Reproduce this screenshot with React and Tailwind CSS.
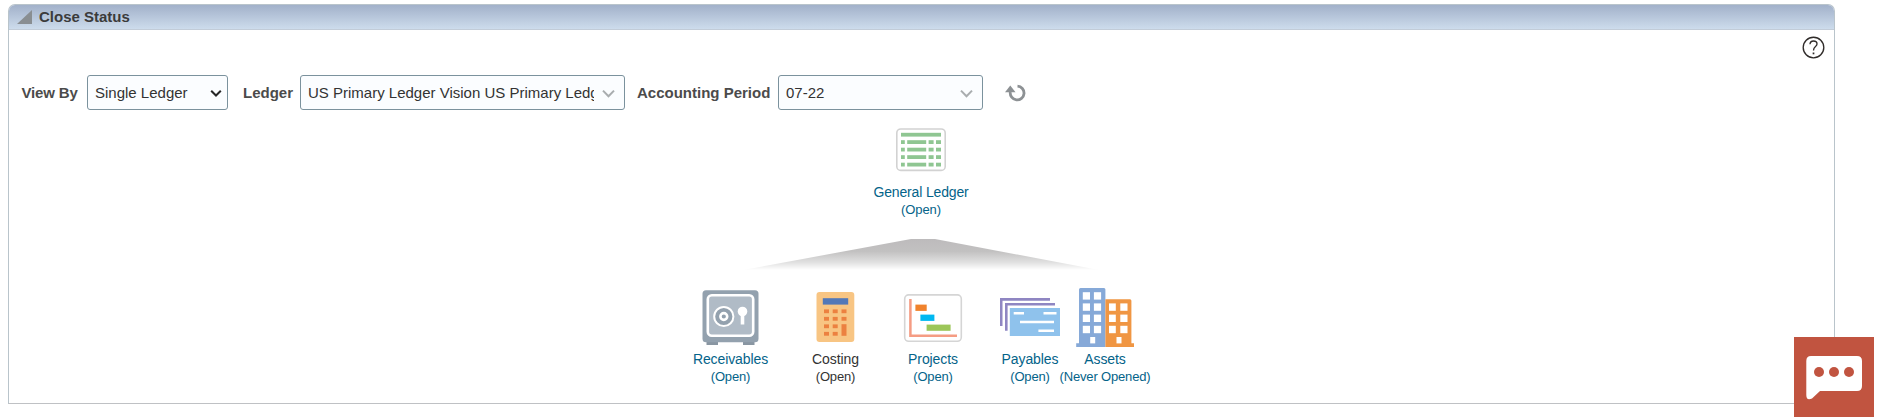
function Field({ className, children, chevron }) {
  return (
    <div className={"flex h-[35px] items-center rounded-[3px] border border-[#7b929d] bg-[#fbfdff] pl-[7px] text-[15px] text-[#333] " + className}>
      <div className="flex-1 overflow-hidden pt-px whitespace-nowrap">{children}</div>
      {chevron}
    </div>
  );
}

function DarkChevron() {
  return (
    <svg className="mr-[5px] ml-1 h-3 w-3 shrink-0" viewBox="0 0 12 12" fill="none" stroke="#262626" strokeWidth="2">
      <path d="M1.2 3.7 6 8.5 10.8 3.7" />
    </svg>
  );
}

function LightChevron() {
  return (
    <svg className="mr-[9px] ml-[8px] h-3 w-[13px] shrink-0" viewBox="0 0 13 12" fill="none" stroke="#a9adaf" strokeWidth="2">
      <path d="M1 3.6 6.5 9.2 12 3.6" />
    </svg>
  );
}

function LedgerIcon() {
  return (
    <svg className="h-[44px] w-[50px]" viewBox="0 0 50 44">
      <rect x="0.8" y="1" width="48.4" height="41.4" rx="4" fill="#fff" stroke="#d2d2d2" strokeWidth="1.6" />
      <g fill="#8fc692">
        <rect x="5" y="4.8" width="40" height="3.8" />
        {[12.2, 19.7, 27.2, 34.7].map((y) => (
          <g key={y}>
            <rect x="5" y={y} width="3.8" height="3.8" />
            <rect x="11.2" y={y} width="19" height="3.8" />
            <rect x="32.6" y={y} width="5" height="3.8" />
            <rect x="40" y={y} width="5" height="3.8" />
          </g>
        ))}
      </g>
    </svg>
  );
}

function SafeIcon() {
  return (
    <svg className="h-[60px] w-[60px]" viewBox="0 0 60 60">
      <path d="M5.5 54h11.5v4H5.5zM42 54h11.5v4H42z" fill="#8996a2" />
      <rect x="1.5" y="3.2" width="56" height="52" rx="3.5" fill="#93a1ae" />
      <rect x="6.8" y="8.3" width="45.4" height="40.4" rx="4" fill="#b0bbc6" stroke="#fff" strokeWidth="2.6" />
      <circle cx="22.8" cy="29.5" r="9.6" fill="#93a1ae" stroke="#fff" strokeWidth="2" />
      <circle cx="22.8" cy="29.5" r="3.4" fill="#93a1ae" stroke="#fff" strokeWidth="2.6" />
      <circle cx="41.5" cy="24.5" r="4.8" fill="#fff" />
      <path d="M39.7 25h3.6v12.5h-3.6z" fill="#fff" />
    </svg>
  );
}

function CalculatorIcon() {
  return (
    <svg className="h-[60px] w-[60px]" viewBox="0 0 60 60">
      <rect x="10.5" y="5" width="37.8" height="50" rx="3" fill="#f8c583" />
      <rect x="16.8" y="11.2" width="25.4" height="6.4" fill="#5278b8" />
      <g fill="#ec8140">
        {[22.4, 29.9, 37.4, 44.9].map((y) => (
          <g key={y}>
            <rect x="18" y={y} width="5" height="3.8" />
            <rect x="26.7" y={y} width="5" height="3.8" />
            {y < 35 && <rect x="35.5" y={y} width="5" height="3.8" />}
          </g>
        ))}
        <rect x="35.5" y="37.2" width="5" height="11.6" />
      </g>
    </svg>
  );
}

function GanttIcon() {
  return (
    <svg className="h-[60px] w-[60px]" viewBox="0 0 60 60">
      <rect x="1.7" y="7.9" width="56.6" height="46.4" rx="4" fill="#fff" stroke="#d5d5d5" strokeWidth="1.6" />
      <path d="M7.4 12v36.7H54" fill="none" stroke="#f59c83" strokeWidth="2.5" />
      <rect x="12.4" y="17.6" width="11.3" height="6.3" fill="#f0822c" />
      <rect x="17.4" y="27.6" width="14" height="6.3" fill="#00b8f1" />
      <rect x="23.6" y="37.6" width="24" height="6.2" fill="#9cc659" />
    </svg>
  );
}

function ChecksIcon() {
  return (
    <svg className="h-[60px] w-[60px]" viewBox="0 0 60 60">
      <path d="M1.2 39V12.4H50M6.3 43.8V17.3H55" fill="none" stroke="#8f86c2" strokeWidth="2.6" />
      <rect x="9.8" y="21" width="50.2" height="28" fill="#8fc2ec" />
      <path d="M13.7 26.2H24M43.5 26.2H56.5M20 35H54M38.4 43.7H54" stroke="#fff" strokeWidth="2.5" />
    </svg>
  );
}

function BuildingsIcon() {
  return (
    <svg className="h-[60px] w-[60px]" viewBox="0 0 60 60">
      <path d="M4 2.5Q4 1 5.5 1H29Q30.4 1 30.4 2.5V60H1.2V56.2H4z" fill="#86a9d8" />
      <path d="M30.4 12.2H55Q56.4 12.2 56.4 13.7V56.2H59V60H30.4z" fill="#f09643" />
      <g fill="#fff">
        {[5.2, 16.4, 27.6, 38.8].map((y) => (
          <g key={y}>
            <rect x="7.8" y={y} width="7.2" height="7.4" />
            <rect x="18.9" y={y} width="7.2" height="7.4" />
            {y > 10 && <rect x="34" y={y} width="6.8" height="7.4" />}
            {y > 10 && <rect x="45.3" y={y} width="7.2" height="7.4" />}
          </g>
        ))}
        <rect x="15.2" y="50" width="5" height="6.4" />
        <rect x="41.5" y="50" width="5" height="6.4" />
      </g>
    </svg>
  );
}

function Module({ className, name, status, icon }) {
  return (
    <div className={"flex flex-col items-center whitespace-nowrap " + className}>
      {icon}
      <div className="mt-[3px] text-[14px] leading-[18px] tracking-[-0.1px]">{name}</div>
      <div className="text-[13px] leading-[17px] tracking-[-0.17px]">{status}</div>
    </div>
  );
}

export default function App() {
  return (
    <div className="relative h-[417px] w-[1899px] overflow-hidden bg-white pt-1 pl-2 font-['Liberation_Sans',Arial,sans-serif]">
      <section className="h-[400px] w-[1827px] rounded-t-[7px] border border-[#b9c4cb] border-b-[#bfc1c4]">
        <header className="flex h-[25px] items-center rounded-t-[6px] border-b border-[#c2ccd8] bg-linear-to-b from-[#a2b1ca] to-[#cddcec] pl-2">
          <svg className="h-[15px] w-[15px]" viewBox="0 0 15 15">
            <path d="M0 14 15 0V14z" fill="#898e92" />
          </svg>
          <h1 className="ml-[7px] text-[15px] leading-[20px] font-bold text-[#3b3b3b]">Close Status</h1>
        </header>
        <div className="flex h-[45px] justify-end pt-[6px] pr-[9px]">
          <svg className="h-[23px] w-[23px]" viewBox="0 0 23 23" fill="none" stroke="#302c2a" strokeWidth="1.35">
            <circle cx="11.5" cy="11.5" r="10.3" />
            <path d="M8 8.2C8.1 5.9 9.6 5 11.5 5 13.6 5 15 6.2 15 8 15 10.8 11.5 10.5 11.5 14.5" />
            <path d="M11.5 16.5v1.8" strokeWidth="1.7" />
          </svg>
        </div>
        <div className="flex h-[35px] items-center text-[15px] font-bold text-[#4b4b4b]">
          <div className="w-[78px] pt-px pl-[12.5px] tracking-[-0.15px] whitespace-nowrap">View By</div>
          <Field className="w-[141px] font-normal" chevron={<DarkChevron />}>Single Ledger</Field>
          <div className="w-[72px] pt-px pl-[15px]">Ledger</div>
          <Field className="w-[325px] font-normal" chevron={<LightChevron />}>US Primary Ledger Vision US Primary Ledger</Field>
          <div className="w-[153px] pt-px pl-[12px] whitespace-nowrap">Accounting Period</div>
          <Field className="w-[205px] font-normal" chevron={<LightChevron />}>07-22</Field>
          <svg className="ml-[22px] h-5 w-[22px]" viewBox="0 0 22 20">
            <path d="M12.5 3.1A6.9 6.9 0 1 1 5.3 9" fill="none" stroke="#8d9194" strokeWidth="2.8" />
            <path d="M0 9.2 5.3 2.6 10.5 9.2z" fill="#8d9194" />
          </svg>
        </div>
        <div className="mt-[18px] ml-[862px] flex w-[100px] flex-col items-center text-[#046389]">
          <LedgerIcon />
          <div className="mt-[11px] text-[14px] leading-[18px] tracking-[-0.15px] whitespace-nowrap">General Ledger</div>
          <div className="text-[13px] leading-[17px] tracking-[-0.1px]">(Open)</div>
        </div>
        <svg className="mt-[21px] ml-[734px] block h-[31px] w-[356px]" viewBox="0 0 356 31">
          <defs>
            <linearGradient id="fan" x1="0" y1="0" x2="0" y2="1">
              <stop offset="0" stopColor="#bdbbbc" />
              <stop offset="0.4" stopColor="#c2c1c1" />
              <stop offset="0.75" stopColor="#e0e0e0" />
              <stop offset="1" stopColor="#fff" />
            </linearGradient>
          </defs>
          <path d="M168 0H192L356 31H0z" fill="url(#fan)" />
        </svg>
        <div className="mt-[17px] ml-[684px] flex text-[#046389]">
          <Module className="w-[75px]" name="Receivables" status="(Open)" icon={<SafeIcon />} />
          <Module className="ml-[30px] w-[75px] text-[#333]" name="Costing" status="(Open)" icon={<CalculatorIcon />} />
          <Module className="ml-[22px] w-[76px]" name="Projects" status="(Open)" icon={<GanttIcon />} />
          <Module className="ml-[29px] w-[60px]" name="Payables" status="(Open)" icon={<ChecksIcon />} />
          <Module className="w-[90px]" name="Assets" status="(Never Opened)" icon={<BuildingsIcon />} />
        </div>
      </section>
      <button className="absolute top-[337px] left-[1794px] h-20 w-20 bg-[#c15440]" aria-label="Chat">
        <svg className="h-20 w-20" viewBox="0 0 80 80">
          <path d="M17 19H63Q68 19 68 24V49Q68 54 63 54H26L18 61.5Q12.3 64 12.3 58V24Q12.3 19 17 19z" fill="#fff" />
          <g fill="#c15440">
            <circle cx="25" cy="35" r="5" />
            <circle cx="40" cy="35" r="5" />
            <circle cx="55" cy="35" r="5" />
          </g>
        </svg>
      </button>
    </div>
  );
}
